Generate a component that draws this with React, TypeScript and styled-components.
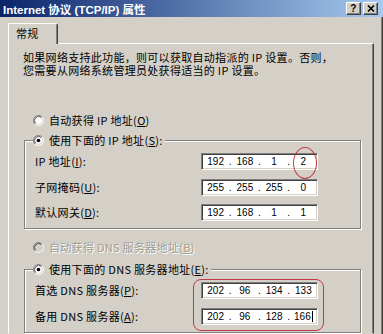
import React from 'react';
import styled, { createGlobalStyle } from 'styled-components';

const GlobalStyle = createGlobalStyle`
    html, body {
        margin: 0;
        padding: 0;
        background: #d4d0c8;
    }
`;

const Window = styled.div`
    width: 383px;
    height: 334px;
    display: flex;
    flex-direction: column;
    overflow: hidden;
    background: #d4d0c8;
    font-family: 'Noto Sans CJK SC', 'Liberation Sans', sans-serif;
    font-size: 11px;
    letter-spacing: 0.3px;
    color: #000;
`;

const TitleBar = styled.div`
    flex: none;
    height: 17px;
    display: flex;
    align-items: center;
    gap: 2px;
    padding: 0 5px 0 3px;
    background: linear-gradient(to right, #0a246a, #a6caf0);
`;

const Title = styled.div`
    flex: 1;
    color: #fff;
    font-family: 'Liberation Sans', 'Noto Sans CJK SC', sans-serif;
    font-weight: bold;
    font-size: 11.5px;
    letter-spacing: 0;
    white-space: nowrap;
`;

const CaptionButton = styled.div`
    width: 15px;
    height: 13px;
    box-sizing: border-box;
    display: flex;
    align-items: center;
    justify-content: center;
    background: #d4d0c8;
    border: 1px solid;
    border-color: #fff #404040 #404040 #fff;
    box-shadow: inset -1px -1px #808080;
    font: bold 10px 'Liberation Sans', sans-serif;
    line-height: 1;
`;

const Body = styled.div`
    flex: 1;
    display: flex;
    flex-direction: column;
    padding: 6px 8px 0 8px;
    border-right: 1px solid #404040;
    box-shadow: inset -1px 0 #808080;
`;

const Tab = styled.div`
    align-self: flex-start;
    position: relative;
    z-index: 1;
    width: 50px;
    height: 21px;
    box-sizing: border-box;
    margin-bottom: -1px;
    padding: 3px 0 0 7px;
    background: #d4d0c8;
    border: 1px solid;
    border-color: #fff #404040 transparent #fff;
    border-bottom: none;
    border-radius: 2px 2px 0 0;
    box-shadow: inset -1px 0 #808080;
    line-height: 12px;
`;

const Panel = styled.div`
    flex: 1;
    padding: 7px 12px 0 14px;
    border: 1px solid;
    border-color: #fff #404040 transparent #fff;
    box-shadow: inset -1px 0 #808080;
`;

const Intro = styled.p`
    margin: 0;
    line-height: 13px;
    white-space: nowrap;
`;

const RadioRow = styled.div<{ $top?: number; $disabled?: boolean }>`
    display: flex;
    align-items: center;
    gap: 5px;
    height: 14px;
    margin: ${(p) => p.$top ?? 0}px 0 0 10px;
    white-space: nowrap;
    color: ${(p) => (p.$disabled ? '#a09c94' : '#000')};
    text-shadow: ${(p) => (p.$disabled ? '1px 1px #fff' : 'none')};
`;

// etched group frame: grey line with a white line beside it
const Group = styled.fieldset<{ $top: number }>`
    margin: ${(p) => p.$top}px 0 0 1px;
    padding: 6px 0 7px 10px;
    border: 1px solid #808080;
    box-shadow: 1px 1px #fff, inset 1px 1px #fff;
    min-width: 0;
`;

const Legend = styled.legend`
    margin-left: -2px;
    padding: 0 2px 0 0;
    background: #d4d0c8;
`;

const Rows = styled.div`
    position: relative;
    display: grid;
    grid-template-columns: 166px 117px;
    row-gap: 8.5px;
    align-items: center;
`;

const Label = styled.div`
    white-space: nowrap;
    line-height: 17px;
`;

const IpBox = styled.div`
    position: relative;
    height: 17px;
    box-sizing: border-box;
    display: grid;
    grid-template-columns: 1fr 6px 1fr 6px 1fr 6px 1fr;
    align-items: center;
    padding: 0 2px;
    background: #fff;
    border: 1px solid;
    border-color: #808080 #fff #fff #808080;
    box-shadow: inset 1px 1px #404040, inset -1px -1px #d4d0c8;
    font: 10px 'Liberation Sans', sans-serif;
    letter-spacing: 0;
`;

const Octet = styled.span`
    text-align: center;
`;

const Dot = styled.span`
    text-align: center;
`;

const Caret = styled.span`
    display: inline-block;
    width: 1px;
    height: 11px;
    margin-left: 1px;
    vertical-align: -2px;
    background: #000;
`;

// red pen marks drawn over the screenshot
const CircleMark = styled.div`
    position: absolute;
    left: 91px;
    top: -7px;
    width: 24px;
    height: 32px;
    box-sizing: border-box;
    border: 1px solid rgba(190, 30, 45, 0.85);
    border-radius: 50%;
    pointer-events: none;
`;

const BoxMark = styled.div`
    position: absolute;
    left: 158px;
    top: -3px;
    width: 131px;
    height: 52px;
    box-sizing: border-box;
    border: 1.5px solid #c4364a;
    border-radius: 8px;
    pointer-events: none;
`;

const Radio: React.FC<{ checked?: boolean; disabled?: boolean }> = ({ checked, disabled }) => (
    <svg width="11" height="11" viewBox="0 0 12 12" style={{ flex: 'none' }}>
        <circle cx="6" cy="6" r="5" fill={disabled ? '#d4d0c8' : '#fff'} />
        <path d="M2.11 9.89A5.5 5.5 0 0 1 9.89 2.11" stroke="#808080" fill="none" />
        <path d="M9.89 2.11A5.5 5.5 0 0 1 2.11 9.89" stroke="#fff" fill="none" />
        <path d="M2.82 9.18A4.5 4.5 0 0 1 9.18 2.82" stroke="#404040" fill="none" />
        <path d="M9.18 2.82A4.5 4.5 0 0 1 2.82 9.18" stroke="#d4d0c8" fill="none" />
        {checked && <circle cx="6" cy="6" r="2" fill="#000" />}
    </svg>
);

const IpInput: React.FC<{ value: string; caret?: boolean; children?: React.ReactNode }> = ({
    value,
    caret,
    children,
}) => {
    const parts = value.split('.');
    return (
        <IpBox>
            {parts.map((part, i) => (
                <React.Fragment key={i}>
                    {i > 0 && <Dot>.</Dot>}
                    <Octet>
                        {part}
                        {caret && i === parts.length - 1 && <Caret />}
                    </Octet>
                </React.Fragment>
            ))}
            {children}
        </IpBox>
    );
};

const App: React.FC = () => {
    return (
        <>
            <GlobalStyle />
            <Window>
                <TitleBar>
                    <Title>Internet 协议 (TCP/IP) 属性</Title>
                    <CaptionButton>?</CaptionButton>
                    <CaptionButton>
                        <svg width="8" height="7" viewBox="0 0 8 7">
                            <path d="M1 0.5L7 6.5M7 0.5L1 6.5" stroke="#000" strokeWidth="1.6" />
                        </svg>
                    </CaptionButton>
                </TitleBar>
                <Body>
                    <Tab>常规</Tab>
                    <Panel>
                        <Intro>
                            如果网络支持此功能，则可以获取自动指派的 IP 设置。否则，
                            <br />
                            您需要从网络系统管理员处获得适当的 IP 设置。
                        </Intro>

                        <RadioRow $top={36}>
                            <Radio />
                            <span>
                                自动获得 IP 地址(<u>O</u>)
                            </span>
                        </RadioRow>

                        <Group $top={6}>
                            <Legend>
                                <RadioRow style={{ margin: 0 }}>
                                    <Radio checked />
                                    <span>
                                        使用下面的 IP 地址(<u>S</u>):
                                    </span>
                                </RadioRow>
                            </Legend>
                            <Rows>
                                <Label>
                                    IP 地址(<u>I</u>):
                                </Label>
                                <IpInput value="192.168.1.2">
                                    <CircleMark />
                                </IpInput>
                                <Label>
                                    子网掩码(<u>U</u>):
                                </Label>
                                <IpInput value="255.255.255.0" />
                                <Label>
                                    默认网关(<u>D</u>):
                                </Label>
                                <IpInput value="192.168.1.1" />
                            </Rows>
                        </Group>

                        <RadioRow $top={11} $disabled>
                            <Radio disabled />
                            <span>
                                自动获得 DNS 服务器地址(<u>B</u>)
                            </span>
                        </RadioRow>

                        <Group $top={8}>
                            <Legend>
                                <RadioRow style={{ margin: 0 }}>
                                    <Radio checked />
                                    <span>
                                        使用下面的 DNS 服务器地址(<u>E</u>):
                                    </span>
                                </RadioRow>
                            </Legend>
                            <Rows>
                                <Label>
                                    首选 DNS 服务器(<u>P</u>):
                                </Label>
                                <IpInput value="202.96.134.133" />
                                <Label>
                                    备用 DNS 服务器(<u>A</u>):
                                </Label>
                                <IpInput value="202.96.128.166" caret />
                                <BoxMark />
                            </Rows>
                        </Group>
                    </Panel>
                </Body>
            </Window>
        </>
    );
};

export default App;
